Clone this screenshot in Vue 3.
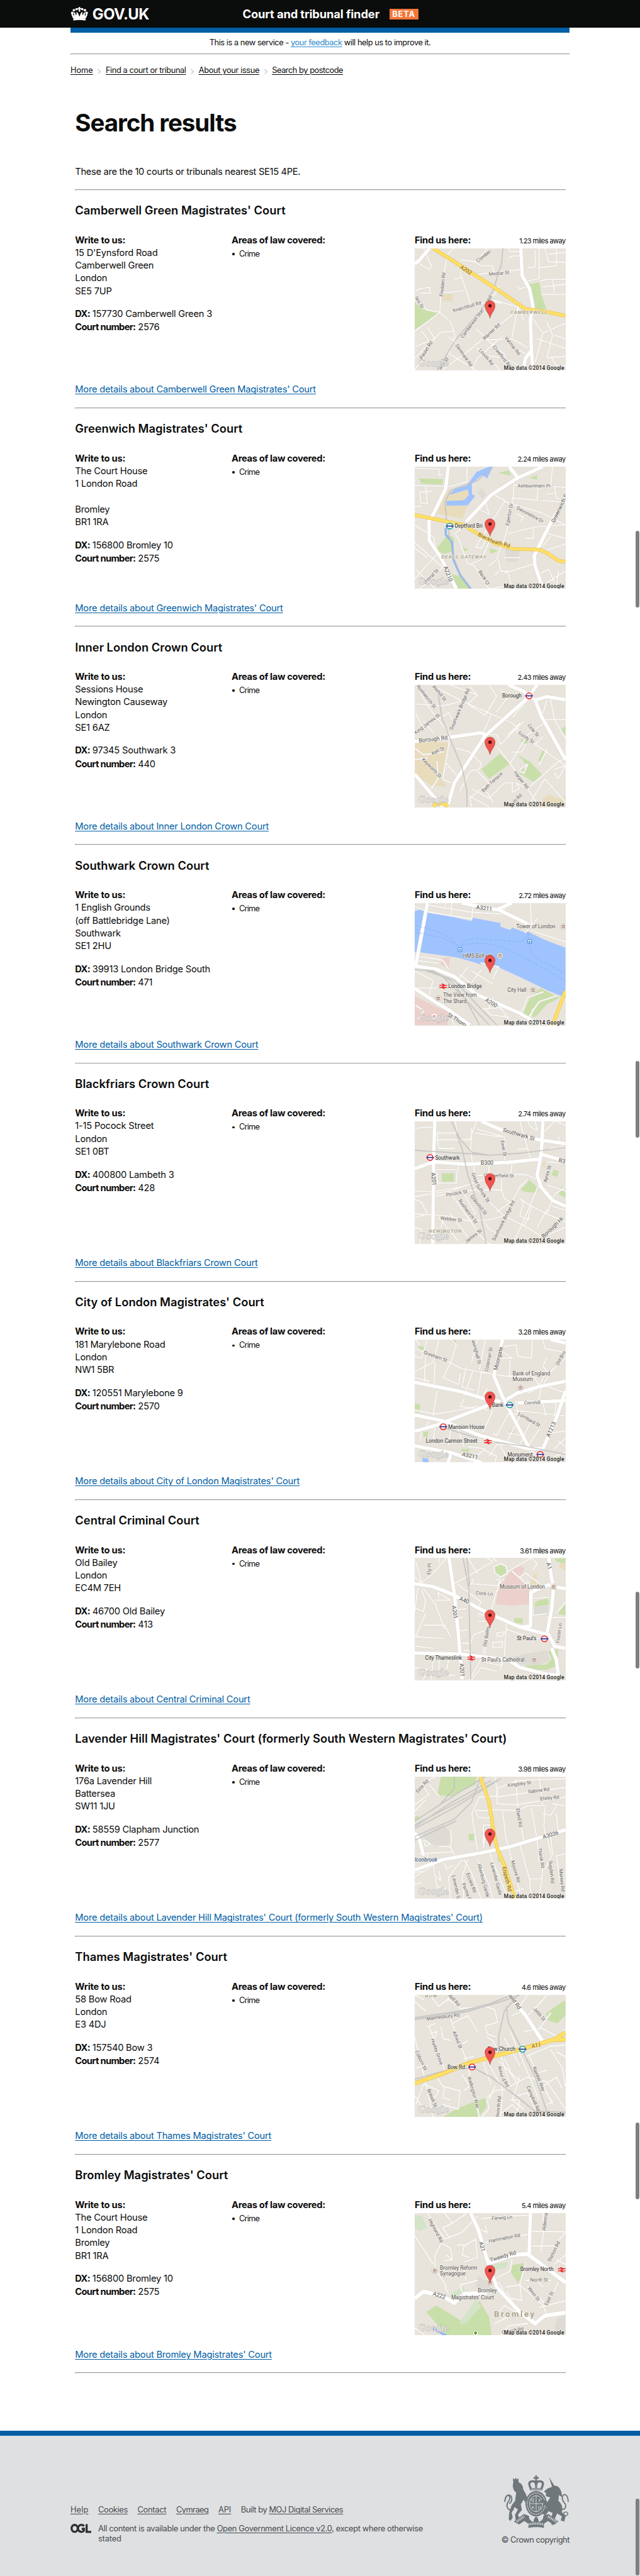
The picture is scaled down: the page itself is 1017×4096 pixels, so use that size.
<script setup>
const courts = [
  { name: "Camberwell Green Magistrates' Court", address: ["15 D'Eynsford Road", 'Camberwell Green', 'London', 'SE5 7UP'], dx: '157730 Camberwell Green 3', number: '2576', miles: '1.23', away: 80 },
  { name: "Greenwich Magistrates' Court", address: ['The Court House', '1 London Road', '\u00a0', 'Bromley', 'BR1 1RA'], dx: '156800 Bromley 10', number: '2575', miles: '2.24', away: 83 },
  { name: 'Inner London Crown Court', address: ['Sessions House', 'Newington Causeway', 'London', 'SE1 6AZ'], dx: '97345 Southwark 3', number: '440', miles: '2.43', away: 83 },
  { name: 'Southwark Crown Court', address: ['1 English Grounds', '(off Battlebridge Lane)', 'Southwark', 'SE1 2HU'], dx: '39913 London Bridge South', number: '471', miles: '2.72', away: 81 },
  { name: 'Blackfriars Crown Court', address: ['1-15 Pocock Street', 'London', 'SE1 0BT'], dx: '400800 Lambeth 3', number: '428', miles: '2.74', away: 82 },
  { name: "City of London Magistrates' Court", address: ['181 Marylebone Road', 'London', 'NW1 5BR'], dx: '120551 Marylebone 9', number: '2570', miles: '3.28', away: 82 },
  { name: 'Central Criminal Court', address: ['Old Bailey', 'London', 'EC4M 7EH'], dx: '46700 Old Bailey', number: '413', miles: '3.61', away: 79 },
  { name: "Lavender Hill Magistrates' Court (formerly South Western Magistrates' Court)", address: ['176a Lavender Hill', 'Battersea', 'SW11 1JU'], dx: '58559 Clapham Junction', number: '2577', miles: '3.98', away: 82 },
  { name: "Thames Magistrates' Court", address: ['58 Bow Road', 'London', 'E3 4DJ'], dx: '157540 Bow 3', number: '2574', miles: '4.6', away: 76 },
  { name: "Bromley Magistrates' Court", address: ['The Court House', '1 London Road', 'Bromley', 'BR1 1RA'], dx: '156800 Bromley 10', number: '2575', miles: '5.4', away: 76 },
]

const green = '#c9dfaa', water = '#9fc3ff', tan = '#e9dcbd', pink = '#ebd0cc', grey = '#dedad4'

// Label: [x, y, angle, text, kind]; icon: [kind, x, y]
const maps = [
  {
    top: 30, sy: 1,
    areas: [[green, 'M54 308L90 345L190 372L54 456Z'], [green, 'M650 216L702 206L712 270L738 346L680 346L668 270Z'], [tan, 'M204 264L254 270L250 306L196 300Z']],
    minor: 'M256 30L225 60L190 250L185 360L120 350L54 290M185 365L54 460M185 365L240 410L268 500L230 575L375 665M100 30L140 120L130 140L70 105M60 250L80 240L130 232L135 262L85 262M290 150L298 180L345 320M262 190L300 180M195 262L310 250M250 355L470 300L590 335M296 90L375 100L430 30M370 100L395 120L460 120L465 170M380 165L610 140M492 225L470 270L440 300L500 315M543 78L560 70L610 68M540 30L545 45L600 46M590 230L600 240L650 225M640 200L700 185L700 30M640 130L680 125L680 40M700 130L790 120L790 30M750 60L837 50M730 30L750 100L837 103M705 200L740 190L837 190M720 230L770 225L837 215M715 270L837 270M770 190L780 260M560 490L590 335L620 400M595 345L330 565L200 660M375 450L430 505L560 500L640 545M510 485L380 600L350 665M430 505L520 580L540 665M375 545L440 600L500 665M420 585L520 600L600 640M250 490L268 520L230 490M54 600L190 465L260 460M90 460L130 510L60 540M54 660L100 600M120 440L160 500M650 370L720 470L680 620M720 470L837 420M740 410L770 480L740 600L837 590M780 480L837 500M690 500L837 550M600 560L650 590M760 590L790 640L837 640',
    major: 'M605 30L612 170L650 240L668 330L655 400L660 560L668 665M660 560L630 600L615 665M130 30L80 90L54 110',
    hwy: 'M150 30L230 80L470 235L630 345L740 360L837 380',
    rail: 'M512 30L505 110L460 250L400 350L270 500L170 665',
    labels: [[382, 104, -38, 'Comber'], [440, 172, -5, 'Medlar St'], [200, 280, -84, 'Flodden Rd'], [54, 285, 60, 'lais St'], [254, 362, -16, 'Knatchbull Rd'], [304, 498, -53, 'Camberwell Stat'], [446, 306, -70, 'Rd'], [416, 508, -43, 'Warner Rd'], [520, 496, 52, 'Valmar Rd'], [458, 542, 52, 'Crawford Rd'], [386, 560, 50, 'Lowth Rd'], [264, 535, 55, 'Denmark Rd'], [92, 608, -58, 'Paulet Rd'], [188, 662, -53, 'arer St'], [288, 132, 33, 'A202', 'road'], [550, 371, 0, 'CAMBERWELL', 'district']],
  },
  {
    top: 57, sy: 1,
    areas: [[tan, 'M225 185L340 150L340 225L300 328L168 300Z'], [water, 'M232 205L260 175L325 155L375 85L440 57L460 57L430 118L405 100L350 145L352 200L368 210L330 258L220 260L218 235L310 232L335 205L330 175Z'], [green, 'M75 118L200 122L200 150L90 145Z'], [green, 'M165 485L225 410L260 430L250 500L200 510Z'], [green, 'M225 610L300 630L340 692L270 692Z'], [green, 'M490 90L540 75L555 105Z'], [green, 'M645 115L690 100L690 125Z'], [green, 'M440 480L490 495L450 510Z'], [green, 'M295 475L335 485L310 500Z'], [grey, 'M380 190L405 170L425 205L405 225Z'], [grey, 'M525 480L600 490L590 550L530 550Z']],
    minor: 'M54 65L180 70L180 100L200 98M54 155L240 160L325 135L325 57M110 160L120 250L85 245L80 190L140 185M54 265L90 262M470 205L540 245L720 300L837 360M570 150L565 220L530 400L505 480M570 150L590 155L760 155L770 57M560 220L810 240M695 160L690 235M780 160L837 165M780 165L790 220L837 240M735 200L780 195M520 240L450 350L370 475L400 480L450 400M385 275L440 305L425 250M540 405L680 370L837 360M670 380L670 430L630 430M580 300L620 320L600 340M260 400L280 430L330 560L360 570L440 692M270 400L310 370M350 560L400 540L440 450M440 570L480 540L500 470M490 540L500 600L540 600M520 530L600 530M520 610L680 560M540 610L560 692M470 620L490 600M54 360L150 420L170 510L54 640M54 450L130 520M130 520L210 590M120 530L54 480M80 692L200 580M160 692L60 590M730 400L837 430M760 420L720 470M740 490L837 460M710 610L750 590L780 660M740 660L837 600M800 600L790 692M440 692L520 680',
    major: 'M228 57L215 170L150 305L128 340L130 440L190 530L270 692M320 345L450 205L590 115L720 57M545 57L590 115M837 230L770 330L700 470L675 520L678 570L720 692',
    hwy: 'M54 308L210 340L310 360L380 405L470 455L570 485L700 488L740 505L800 545L837 552',
    stream: 'M215 375L215 410L248 450L255 540L290 620L345 692',
    rail: 'M460 57L380 130L240 180L212 240L220 350L260 540L290 620L340 692',
    labels: [[588, 164, 0, 'Ashburnham Pl'], [582, 278, 28, 'Devonshire Dr'], [542, 364, -79, 'Egerton Dr'], [780, 350, -64, 'Greenwich S', 'big'], [110, 668, -45, 'dmiral St'], [204, 578, 70, 'A2210', 'big'], [384, 604, 57, 'Beck Cl'], [380, 416, 26, 'Blackh', 'road'], [455, 453, 15, 'eath Rd', 'road'], [192, 535, 0, 'DEALS GATEWAY', 'district'], [262, 374, 0, 'Deptford Bri', 'place']],
    icons: [['dlr', 236, 366]],
  },
  {
    top: 51, sy: 1,
    areas: [[tan, 'M54 345L235 350L190 540L225 580L140 575L54 520Z'], [green, 'M400 490L495 408L548 460L440 540Z'], [green, 'M595 510L650 448L718 520L670 555Z'], [green, 'M590 415L660 455L630 460Z'], [green, 'M610 330L650 340L630 360L605 345Z'], [green, 'M718 390L742 400L715 455L695 445Z'], [green, 'M810 285L837 265L837 315Z'], [tan, 'M720 640L755 620L790 640L837 630L837 684L710 684Z']],
    minor: 'M54 150L200 160L300 135L140 51M60 51L120 160L240 310M54 300L230 195L260 250M240 51L380 105L340 60M300 135L560 250L600 290M380 105L330 150L420 210L480 110L440 51M450 210L410 300M480 190L540 110L500 80M560 220L640 130M620 240L500 360L480 310L430 310M480 370L550 460L640 590L700 684M550 460L640 310L740 240M580 290L740 400L837 470M540 310L600 250M560 400L610 400L630 360M640 590L800 450L837 430M700 470L740 390M760 130L780 230L837 330M730 230L837 230M680 360L720 320M740 130L720 200M240 310L200 540L240 560M54 380L100 415L200 400M54 440L120 430M170 450L175 540L140 590M220 460L270 520M270 380L340 400L400 460L390 490L340 500L290 600M380 500L440 560L340 640L350 684M350 590L440 640L480 600L520 560L570 560M340 630L440 684M430 610L460 660M560 560L560 610L600 590L580 560L640 590M600 490L640 465L620 510L600 500M640 684L730 540L837 660M780 490L837 470L800 540L780 510M100 240L150 300M60 200L90 260',
    major: 'M54 345L240 322L400 300L420 310M224 684L260 560L420 315L640 120L690 51M540 51L620 85L680 130L710 210L837 440M680 130L740 112L837 128M54 515L160 640L200 684',
    rail: 'M175 90L195 220L245 350L300 480L325 600L325 684',
    hwy: 'M150 684L165 668L210 668L228 684',
    labels: [[62, 58, 52, 'Rushworth St'], [145, 58, 52, 'asshill St'], [60, 308, -37, 'King James St'], [250, 288, -67, 'Southwark Bridge Rd'], [76, 350, -6, 'Borough Rd', 'big'], [146, 416, -25, 'Kell St'], [90, 440, 46, 'Keyworth St'], [586, 304, 33, 'Trinity St'], [638, 262, 50, 'Cole St'], [566, 506, 52, 'Harper Rd'], [410, 610, -43, 'Bath Terrace'], [574, 668, -48, 'th Rd'], [508, 116, 0, 'Borough', 'place']],
    icons: [['tube', 648, 108]],
  },
  {
    top: 48, sy: 1,
    areas: [[water, 'M54 90L80 82L350 142L355 124L500 152L498 170L550 188L560 175L625 200L640 195L720 235L837 280L837 540L740 500L600 432L485 380L390 365L350 352L270 330L54 300Z'], [green, 'M610 640L650 545L705 490L808 540L740 575L680 640Z'], [pink, 'M190 335L235 330L232 385L192 372Z'], [pink, 'M54 530L170 590L230 610L225 681L54 681Z']],
    minor: 'M54 65L130 95L350 130L360 48M245 48L245 110M130 60L350 95L500 105M215 48L212 62M510 105L530 48M550 110L660 160L655 48M660 190L837 250M630 200L690 130M54 320L200 345L230 390M54 345L180 360M54 400L150 450L130 520M270 460L330 380M350 460L400 395M350 400L460 470M290 420L340 460M460 440L490 380L400 360M440 590L460 540M500 600L520 570M600 640L640 540L720 510M400 600L500 590L560 681M420 600L450 630L540 640M54 490L170 490M240 640L260 681M60 580L90 600M70 650L100 610M640 650L700 560L790 530M640 681L668 600',
    major: 'M120 48L60 370M300 48L480 82L530 60L560 48M490 82L640 155M54 375L160 390L260 430L370 520L600 620L700 681M54 492L160 560L240 610L340 681',
    hwy: 'M837 505L770 681',
    rail: 'M54 395L150 400L240 450L320 550L390 681M100 395L200 430L300 530L440 681M120 395L260 450L400 600L480 681',
    dashes: 'M54 165Q250 200 288 290Q290 235 380 232L580 248Q640 250 640 200M54 200Q250 230 275 275M300 265Q440 240 560 300T837 455M645 200Q640 320 710 350T837 415',
    labels: [[372, 78, 8, 'A3211', 'big'], [418, 556, 32, 'A200', 'big'], [582, 178, 0, 'Tower of London', 'poi'], [305, 332, 0, 'HMS Belfast', 'poi'], [535, 509, 0, 'City Hall', 'poi'], [202, 536, 0, 'The View from', 'poi'], [202, 568, 0, 'The Shard', 'poi'], [228, 488, 0, 'London Bridge', 'place'], [222, 634, 32, 'St Thom', 'big']],
    icons: [['pier', 289, 290], ['pier', 651, 247], ['poi', 826, 170], ['poi', 497, 322], ['poi', 669, 500], ['poi', 176, 544], ['train', 202, 480], ['hospital', 155, 637]],
  },
  {
    top: 39, sy: 1,
    areas: [[green, 'M194 310L258 308L258 352L196 354Z'], [green, 'M605 395L650 345L700 390L690 412L625 405Z'], [green, 'M775 290L803 298L795 328L765 318Z'], [green, 'M805 385L837 378L837 435L803 420Z'], [tan, 'M720 250L735 245L730 280L718 275Z']],
    minor: 'M54 75L150 68M170 100L180 180L260 180M160 100L275 100L265 39M165 135L340 135L375 39M350 70L345 190L355 260M380 80L520 120L520 240M372 100L500 120M54 430L240 400L400 345L480 340L480 345M54 400L150 405L320 375M54 445L90 460L120 520L54 540M150 430L260 410L370 395L505 395L505 340M165 290L280 290L280 265M170 300L172 360L270 360L275 300M360 260L365 330L385 400L515 530L620 580L720 640M380 320L630 315L690 340M440 270L440 320M505 395L520 440L550 460L480 510M560 260L550 320M230 400L260 440L400 640L440 675M300 400L370 520L330 540M54 520L220 530L330 555L440 550L520 530L600 380L640 340M180 540L280 660M240 520L330 640M415 560L440 600L520 640M560 675L600 600L690 390L720 340M600 440L660 480L640 550L600 530L620 460L600 440M620 580L650 540M660 480L740 520L837 560M740 520L780 420L837 380M690 590L740 500M720 640L837 590M770 480L837 500M740 370L837 400M640 39L660 70L690 85L680 39M600 39L640 180L655 230M590 185L640 180M740 250L837 255M720 100L760 60L780 39M790 39L837 60M760 180L837 175M800 120L820 170M54 590L90 600L80 675M200 560L190 590',
    major: 'M158 39L152 250L148 675M54 285L150 250L320 262L540 252L700 235M400 39L520 90L700 135L837 155M720 39L712 200L690 320L710 380L770 450L837 480M710 210L800 235L837 250',
    rail: 'M54 190L300 205L440 215L600 205L837 175M245 39L290 130L350 200L440 215M270 100L300 180L330 320L390 490L425 675',
    labels: [[510, 92, 16, 'Southwark St', 'big'], [500, 140, 80, 'Ewer St'], [396, 264, 0, 'B300', 'big'], [800, 250, 12, 'B3', 'big'], [412, 328, 1, 'Copperfield St'], [738, 358, -74, 'Ayres St'], [140, 306, 85, 'A201', 'big'], [218, 430, -10, 'Pocock St'], [348, 310, 68, 'Great'], [370, 372, 56, 'Suffolk St'], [342, 430, 52, 'Glasshill St'], [280, 452, 54, 'Rushworth St'], [186, 550, 6, 'Webber St'], [470, 662, -63, 'Southwark Bridge Rd'], [322, 674, -38, 'James St'], [724, 648, -44, 'Borough Hi', 'big'], [126, 619, 0, 'NEWINGTON', 'district'], [160, 237, 0, 'Southwark', 'place']],
    icons: [['tube', 134, 227]],
  },
  {
    top: 33, sy: 1,
    areas: [[green, 'M75 65L110 75L100 90L78 82Z'], [green, 'M240 35L272 38L265 55L245 50Z'], [green, 'M54 365L83 368L78 412L54 410Z'], [green, 'M98 512L125 512L120 543L100 538Z'], [green, 'M295 602L340 602L335 618L295 612Z'], [water, 'M92 650L122 650L128 672L98 672Z'], [grey, 'M540 505L575 490L570 520L545 520Z']],
    minor: 'M54 80L130 110L240 155L300 185L470 215L580 230M240 33L270 60L240 155L200 230L280 265M120 33L90 130L54 120M180 33L150 150L54 200M110 120L105 250M160 150L155 260M290 210L285 260M320 180L300 280L360 295M400 200L380 330M355 200L320 300L350 310M350 150L380 33M420 33L390 190M500 90L560 130L480 130M550 140L545 220L590 225L670 220L700 270M520 70L580 60L590 120L660 130L665 33M720 33L730 80L837 100M700 270L740 200L720 170L740 130M837 130L760 200L720 270L837 310M640 310L720 280M710 290L695 360M430 290L400 340M54 400L160 420L280 400L380 380L430 400M170 300L150 430M310 340L290 380L360 390M460 400L410 510M550 400L480 530L460 520M600 430L530 570M660 450L600 580M700 500L640 590M580 350L590 420L540 420M540 520L600 530M570 400L837 430M720 360L735 430M790 360L780 430M750 520L830 510M780 600L837 545M800 560L837 590M54 500L200 480L330 510M130 460L90 510L80 560M160 480L150 560M240 500L230 580M280 500L310 590M440 640L480 580L520 580M500 590L550 672M420 610L480 640L470 672M340 672L420 600L330 590M650 640L660 610L700 640M54 230L130 250M60 33L80 60M780 640L837 620',
    major: 'M54 255L280 300L430 345L500 355M54 510L160 480L460 365M530 345L590 310L690 280L837 250M510 33L465 220L510 330L650 600M54 425L200 455L390 530L540 572L640 600L720 600L790 440L837 300M54 585L240 620L400 672M240 630L228 672M760 33L837 50M590 362L837 350',
    rail: 'M470 565L640 590L837 630M200 490L380 545',
    labels: [[98, 106, 20, 'Gresham St'], [350, 38, 75, 'asinghall St'], [434, 200, -79, 'Coleman St'], [482, 194, -76, 'Moorgate', 'big'], [800, 170, -62, 'Old Bro'], [622, 370, -1, 'Cornhill'], [588, 424, 30, 'Lombard St'], [754, 542, -66, 'A1213', 'big'], [298, 638, 12, 'A3211', 'big'], [562, 218, 0, 'Bank of England', 'poi'], [562, 250, 0, 'Museum', 'poi'], [455, 382, 0, 'Bank', 'place'], [228, 496, 0, 'Mansion House', 'place'], [112, 570, 0, 'London Cannon Street', 'place'], [536, 640, 0, 'Monument', 'place']],
    icons: [['poi', 604, 284], ['dlr', 547, 373], ['tube', 202, 486], ['train', 434, 563], ['tube', 706, 630]],
  },
  {
    top: 30, sy: 1,
    areas: [[pink, 'M490 165L590 65L625 85L600 140L650 200L650 270L560 280L475 270Z'], [green, 'M500 58L535 75L535 115L500 130L470 110L468 75Z'], [green, 'M570 342L615 345L615 372L572 368Z'], [green, 'M675 270L690 255L745 240L750 275L680 285Z'], [green, 'M780 35L837 30L837 60L790 50Z'], [tan, 'M660 130L690 105L685 160L700 180L655 175Z'], [tan, 'M810 55L837 60L837 95L805 80Z'], [grey, 'M672 285L745 280L745 330L675 325Z'], [grey, 'M555 545L740 510L755 560L700 590L600 585Z'], [green, 'M628 590L740 585L765 555L745 515L800 505L795 590L740 612L640 612Z'], [green, 'M795 320L837 270L837 330Z']],
    minor: 'M60 50L90 160L150 110L220 30M54 130L90 160M100 190L160 270L210 400M70 190L54 310M90 200L110 250L100 310L54 290M180 60L180 30M180 240L175 210L240 250M160 250L235 250M100 380L210 380L240 440M60 440L110 320M260 165L460 50L430 30M280 170L400 260L380 290M360 140L330 200M350 165L480 175L520 140M480 200L445 330M500 60L530 75L535 110L500 130L470 110L465 75L500 60M475 145L495 140L485 200M380 110L330 30L350 60M560 100L640 170M600 130L630 110L700 160M640 150L650 180L700 200M540 100L660 30L690 60L670 90M460 30L480 50M385 320L440 340M385 360L430 360M340 480L360 430L440 400L420 520L340 662M440 330L410 520M260 300L320 295M280 340L300 340M290 410L325 405M300 475L335 475M310 510L345 515M530 370L520 540L500 610M460 470L510 465L510 495L460 495L460 470M480 420L520 415L510 440L480 435ZM410 570L500 590L520 550M350 662L400 600L480 620M670 240L750 235M740 320L660 330M665 250L670 330M740 340L837 340M790 320L837 260M640 410L650 395M700 450L640 440L530 400M54 440L200 450M60 490L150 500M150 560L140 662M180 550L180 640L260 640M54 600L120 610L100 662M230 560L220 610',
    major: 'M54 165L150 180L250 220L440 320L600 390L750 430L780 490L837 500M232 30L260 220L280 420L300 662M54 525L290 530L540 560L600 600L740 635L800 640L790 560L765 500M750 30L765 140L775 180L837 190M700 190L750 170L775 185L765 300L740 430M600 390L655 385L658 210L700 190',
    rail: 'M305 30L335 190L345 662M325 30L340 180',
    labels: [[136, 118, -87, 'Ely Pl'], [370, 220, 5, 'Cock Ln'], [284, 250, 22, 'A40', 'big'], [248, 280, 82, 'A201', 'big'], [288, 580, 86, 'A201', 'big'], [738, 58, 75, 'A1', 'big'], [426, 494, -81, 'Old Bailey'], [804, 474, -82, 'Foster Ln'], [496, 190, 0, 'Museum of London', 'poi'], [400, 570, 0, "St Paul's Cathedral", 'poi'], [108, 559, 0, 'City Thameslink', 'place'], [584, 459, 0, "St Paul's", 'place']],
    icons: [['poi', 775, 181], ['poi', 675, 561], ['train', 348, 551], ['tube', 728, 451]],
  },
  {
    top: 39, sy: 1,
    areas: [[green, 'M190 39L375 39L370 80L240 142L172 135Z'], [green, 'M54 250L70 242L78 255L54 270Z'], [green, 'M333 338L362 335L362 372L335 370Z'], [green, 'M485 450L500 480L485 482Z'], [grey, 'M95 340L205 290L240 330L235 390L170 400L110 370Z']],
    minor: 'M54 185L130 130L90 80L160 39M130 80L180 140M54 220L110 160M470 39L480 100L480 140L390 145L350 230L380 420M370 215L450 215M370 220L385 250L440 255L445 225M410 390L410 290L455 290M480 100L580 60L837 50M480 180L580 185L837 145M480 145L837 95M580 60L590 210L620 370M485 110L480 180M700 39L720 190M510 220L530 370L550 410M450 210L590 215L640 190L740 190M660 200L690 370M730 200L725 300L735 360M790 230L800 330L780 350M720 230L760 240L790 190M770 180L837 190M410 410L420 340M54 560L200 470M110 370L135 390L110 400L100 370ZM80 440L250 430M180 400L240 405L265 460M240 320L245 370L240 400M120 440L120 470M150 500L170 610L230 630M210 490L220 520L250 500M300 470L230 560L240 675M310 470L350 540L400 675M330 470L300 560L310 675M380 470L440 600L460 675M440 430L460 480L540 675M540 400L580 560L600 640M600 390L650 570L715 570L720 500M690 370L700 480M760 350L770 440L730 520M837 440L790 450L810 600M650 570L660 675M715 570L700 675M180 530L190 580L170 560M560 640L620 620M54 600L90 590M54 540L90 530M740 340L760 440',
    major: 'M54 525L200 470L400 435L560 400L837 315M54 330L80 370L100 450',
    hwy: 'M395 39L440 170L470 360L485 420L520 500L575 675',
    rail: 'M54 290L300 160L480 60M54 310L260 200L500 50M54 270L300 110L420 39M54 350L260 260L350 170L390 60M54 300L250 170L450 60M54 370L180 310L270 270M260 39L260 100L180 190',
    labels: [[70, 125, -47, 'Este Rd'], [538, 92, -7, 'Kingsley St'], [644, 126, -7, 'Sabine Rd'], [706, 162, -5, 'Elsley Rd'], [580, 206, 80, 'Eland Rd'], [722, 362, -16, 'A3036', 'big'], [694, 412, 80, 'Thirsk Rd'], [750, 476, 84, 'Sugden Rd'], [804, 520, 84, 'Marney Rd'], [554, 478, 74, 'Mysore Rd'], [446, 488, 75, 'Lavender Garde'], [380, 494, 75, 'Altenburg Garde'], [248, 554, 78, 'Lavender S'], [320, 544, 68, 'Eccles Rd'], [298, 596, 68, 'Parma C'], [508, 510, 76, 'Elspeth Rd', 'road'], [54, 480, 0, 'lconbrook', 'river']],
  },
  {
    top: 40, sy: 1.186,
    areas: [[green, 'M735 120L837 62L837 130L795 165L740 150Z'], [green, 'M200 576L280 535L420 492L428 530L385 576Z']],
    minor: 'M54 70L110 110M130 40L180 90L250 40M54 40L100 60M190 80L230 60L290 100L420 90L470 105L485 160L420 175L430 210L480 225M240 145L260 190L320 320L390 576M250 165L330 130L380 200M120 180L160 165M130 180L210 370M140 210L170 200L150 250M190 180L200 230L240 240M54 225L110 420L150 576M60 360L120 350M290 260L330 240M310 320L360 310M410 335L450 430M430 225L460 240L490 290M440 345L510 450L500 576M500 300L550 440L640 400L740 420L837 540M550 200L700 500M520 230L600 350M490 330L590 410M540 370L580 420M520 320L550 370M630 310L760 265L837 260M650 310L700 400L770 520M760 280L820 360L837 440M790 290L837 310M600 400L560 500L620 540M590 480L640 470L700 576M720 440L790 400L820 450M700 380L740 370M700 420L770 510L740 520M170 400L200 440L290 460L280 540L200 520M210 440L200 490L240 500M60 520L100 430L180 460L150 500M54 480L100 540M300 390L340 440L310 460M430 490L470 460L540 450M430 500L440 540L400 576M550 500L600 500L590 540M470 440L440 500M560 130L620 110M600 90L640 40M640 130L700 80L740 40M620 200L700 190L760 120M790 240L837 190M700 180L790 220M480 576L560 520L620 576',
    major: 'M530 30L630 130L720 245',
    hwy: 'M54 428L200 385L330 340L460 310L640 270L780 235L837 205M780 237L837 235',
    rail: 'M54 140L300 110L440 80L560 40M54 148L330 112L500 70L600 40M590 40L520 110L490 220L490 300M530 90L540 160L600 260L680 400L740 550M54 410L220 370L360 360L450 400L560 470L680 550L837 555',
    labels: [[116, 152, -7, 'Malmesbury Rd'], [228, 44, 48, 'dell Rd'], [536, 40, 54, 'field Rd', 'big'], [668, 102, 50, 'Jebb St'], [138, 236, 70, 'Harley Grove'], [250, 202, 68, 'Alfred St'], [56, 288, 65, 'Coborn St'], [118, 456, 68, 'British St'], [328, 400, 74, 'Wellington Way'], [486, 354, 76, 'Arnol'], [505, 410, 57, 'd Rd'], [490, 580, -83, 'dworth Rd'], [666, 358, 68, 'Rainhill Way'], [634, 442, 67, 'Campbell Rd'], [662, 272, -6, 'A11', 'road'], [108, 51, 0, 'BOW', 'district'], [432, 286, 0, 'Bow Church', 'place'], [224, 365, 0, 'Bow Rd', 'place']],
    icons: [['dlr', 614, 278], ['tube', 352, 356]],
  },
  {
    top: 996, sy: 1.186,
    areas: [[green, 'M115 1430L165 1400L300 1470L390 1380L440 1450L455 1532L220 1532Z'], ['#d3e4c9', 'M285 1480L370 1375L400 1405L320 1480Z'], ['#d3e4c9', 'M54 1005L90 1010L120 1060L80 1075L54 1055Z'], ['#d3e4c9', 'M430 1225L540 1210L530 1235L480 1245Z'], ['#d3e4c9', 'M240 1350L310 1318L315 1340L260 1365Z'], [green, 'M555 1225L625 1215L615 1270L590 1302L555 1260Z'], [grey, 'M380 1270L440 1300L450 1340L370 1320Z'], [grey, 'M790 1460L837 1440L837 1520L780 1510Z']],
    minor: 'M120 996L170 1060L210 1110L300 1080L380 1010M54 1095L150 1220M210 996L250 1040L200 1060L230 1100M250 1040L320 1000M200 1130L240 1150L250 1200M190 1130L160 1180L160 1240L220 1320M275 1135L310 1135L300 1180L340 1190M370 1060L430 1080L420 1050M400 1020L520 1010L650 1005M420 1125L640 1090M660 1140L780 1140L837 1080M720 996L725 1070L710 1160M650 1075L837 1078M310 1140L370 1110L380 1190L310 1210M220 1180L250 1200L210 1205M630 1290L760 1290M630 1215L600 1310L720 1400L740 1440M530 1320L600 1310L610 1380L560 1370M480 1280L550 1250L560 1200M490 1300L560 1400L600 1420M530 1340L600 1430M640 1320L740 1400L800 1300M700 1410L837 1380M720 1320L690 1290M300 1340L290 1310L380 1290M54 1360L100 1340M54 1500L110 1532M480 1440L520 1400L600 1440M470 1480L540 1450M500 1532L540 1490L640 1480M780 1220L837 1180M790 1200L837 1220M230 1350L210 1320M310 1240L320 1290',
    major: 'M345 996L385 1070L430 1200L480 1320L600 1430L680 1480L730 1445L837 1432M440 1215L560 1180L640 1175L837 1300M655 996L648 1180M54 1370L100 1340L200 1360L260 1390L310 1350L430 1345',
    stream: 'M150 1500L220 1535',
    labels: [[454, 1026, -4, 'Farwig Ln'], [440, 1126, -11, 'Hammelton Rd'], [448, 1210, -17, 'Tweedy Rd', 'big'], [124, 1026, 62, 'Highland Rd'], [388, 1124, 75, 'A21', 'big'], [732, 1074, -82, 'Alderma'], [758, 1210, -63, 'Station Rd'], [654, 1296, -1, 'North St'], [640, 1326, 52, 'West St'], [742, 1402, -64, 'East St'], [146, 1356, 17, 'A222', 'big'], [508, 1526, -10, 'Church Rd'], [185, 1243, 0, 'Bromley Reform', 'poi'], [185, 1270, 0, 'Synagogue', 'poi'], [382, 1343, 0, 'Bromley', 'poi'], [244, 1373, 0, "Magistrates' Court", 'poi'], [466, 1452, 0, 'Bromley', 'town'], [602, 1250, 0, 'Bromley North', 'place']],
    icons: [['poi', 158, 1249], ['poi', 445, 1301], ['train', 818, 1244], ['tree', 370, 1522]],
  },
]

const thumbs = [919, 1838, 2757, 3677, 4328]

// Spreads or tightens the letters so that the text takes the given width.
const vFit = {
  mounted(el, { value }) {
    const page = el.closest('.page')
    const scale = page.getBoundingClientRect().width / 1108
    const natural = el.getBoundingClientRect().width / scale
    el.style.letterSpacing = `${(value - natural) / el.textContent.trim().length}px`
  },
}
</script>

<template>
  <div class="page">
    <header class="top">
      <div class="wrap top-row">
        <a class="brand">
          <svg class="crown" width="31" height="24" viewBox="0 0 31 24" fill="#fff">
            <circle cx="3" cy="10.5" r="2.2" /><circle cx="6" cy="5.8" r="2.2" /><circle cx="10.6" cy="3.8" r="2" /><circle cx="20.4" cy="3.8" r="2" /><circle cx="25" cy="5.8" r="2.2" /><circle cx="28" cy="10.5" r="2.2" />
            <path d="M14.2 0h2.6l-.5 2.2 2.3-.5v2.6l-2.2-.4.7 3.2-1.6 1.5-1.6-1.5.7-3.2-2.2.4V1.700l2.300.5z" />
            <path d="M1.400 13l3.200-.7 1 4.200.7-4-1.300-3.400 3.300 1.300 1 4.400 1.400-3-.7-3.700 3 2.600L15.500 17l2.500-6.300 3-2.600-.7 3.700 1.400 3 1-4.400L26 9.100l-1.300 3.400.7 4 1-4.200 3.200.7-3 7H4.400z" />
            <path d="M4.500 20.500q11-3 22 0l-.8 3.200q-10.200-2.200-20.400 0z" />
          </svg>
          <span v-fit="98" class="brand-name">GOV.UK</span>
        </a>
        <span class="service"><span v-fit="237">Court and tribunal finder</span></span>
        <span class="beta"><span v-fit="40">BETA</span></span>
      </div>
    </header>

    <div class="wrap">
      <div class="blue" />
      <p class="feedback"><span v-fit="383">This is a new service - <a>your feedback</a> will help us to improve it.</span></p>
      <div class="rule" />
      <nav class="crumbs">
        <a v-fit="39">Home</a><i /><a v-fit="139">Find a court or tribunal</a><i /><a v-fit="105">About your issue</a><i /><a v-fit="123">Search by postcode</a>
      </nav>
    </div>

    <main>
      <h1><span v-fit="279">Search results</span></h1>
      <p class="intro"><span v-fit="390">These are the 10 courts or tribunals nearest SE15 4PE.</span></p>

      <section v-for="(court, n) in courts" :key="n" class="court">
        <div class="rule" />
        <h2>{{ court.name }}</h2>
        <div class="cols">
          <div class="write">
            <h3><span v-fit="87">Write to us:</span></h3>
            <p v-for="(line, i) in court.address" :key="i">{{ line }}</p>
            <div class="refs">
              <p><b>DX:</b> {{ court.dx }}</p>
              <p><b>Court number:</b> {{ court.number }}</p>
            </div>
          </div>
          <div class="law">
            <h3><span v-fit="162">Areas of law covered:</span></h3>
            <ul><li><span v-fit="35">Crime</span></li></ul>
          </div>
          <div class="find">
            <div class="find-head">
              <h3><span v-fit="97">Find us here:</span></h3>
              <small><span v-fit="court.away">{{ court.miles }} miles away</span></small>
            </div>
            <svg class="map" viewBox="0 0 783 636">
              <g :transform="`scale(1 ${maps[n].sy}) translate(-54 ${-maps[n].top})`">
                <path v-for="(a, i) in maps[n].areas" :key="i" :fill="a[0]" :d="a[1]" />
                <path v-if="maps[n].stream" class="stream" :d="maps[n].stream" />
                <path class="minor case" :d="maps[n].minor" />
                <path class="minor" :d="maps[n].minor" />
                <path v-if="maps[n].major" class="major case" :d="maps[n].major" />
                <path v-if="maps[n].major" class="major" :d="maps[n].major" />
                <path v-if="maps[n].rail" class="rail" :d="maps[n].rail" />
                <path v-if="maps[n].hwy" class="hwy case" :d="maps[n].hwy" />
                <path v-if="maps[n].hwy" class="hwy" :d="maps[n].hwy" />
                <path v-if="maps[n].dashes" class="dashes" :d="maps[n].dashes" />
              </g>
              <text v-for="(l, i) in maps[n].labels" :key="i" :class="['label', l[4]]" :transform="`translate(${l[0] - 54} ${(l[1] - maps[n].top) * maps[n].sy}) rotate(${l[2]})`">{{ l[3] }}</text>
              <g v-for="(k, i) in maps[n].icons" :key="i" :transform="`translate(${k[1] - 54} ${(k[2] - maps[n].top) * maps[n].sy})`">
                <template v-if="k[0] === 'tube' || k[0] === 'dlr'">
                  <circle r="15" fill="#fff" :stroke="k[0] === 'tube' ? '#ee1c23' : '#12a0a6'" stroke-width="5" />
                  <path d="M-20 0H20" stroke="#2b3a9c" stroke-width="6" />
                </template>
                <path v-else-if="k[0] === 'train'" d="M-20 -5H20M-20 6H20M-8 -13L8 -5L-8 6L8 13" fill="none" stroke="#ee1c23" stroke-width="4.500" />
                <template v-else-if="k[0] === 'pier'">
                  <rect x="-10" y="-10" width="20" height="20" rx="3" fill="#fff" stroke="#4a90d9" stroke-width="4" />
                  <path d="M-6 5H6L3 -4H-3Z" fill="#4a90d9" />
                </template>
                <template v-else-if="k[0] === 'hospital'">
                  <circle r="14" fill="#fff" /><path d="M-4 -7V7M4 -7V7M-4 0H4" stroke="#e33" stroke-width="3" fill="none" />
                </template>
                <template v-else-if="k[0] === 'tree'">
                  <circle r="15" fill="#fff" stroke="#a9a49b" stroke-width="2" /><circle cy="-1" r="8" fill="#62a01c" /><path d="M0 0V11" stroke="#62a01c" stroke-width="3" />
                </template>
                <template v-else>
                  <circle r="15" fill="#fff" stroke="#b5b0a8" stroke-width="2.500" />
                  <path d="M-9 -4L0 -9L9 -4ZM-7 -2V6M0 -2V6M7 -2V6M-9 7H9" fill="none" stroke="#8a5a3c" stroke-width="2.500" />
                </template>
              </g>
              <g class="pin">
                <path d="M391 363C388 338 365 325 365 297A26 26 0 0 1 417 297C417 325 394 338 391 363Z" fill="#f0544f" stroke="#a93430" stroke-width="2" />
                <circle cx="391" cy="298" r="8.500" fill="#4d0d0b" />
              </g>
              <text class="google" x="20" y="610" textLength="156">Google</text>
              <text class="credit" x="463" y="630" textLength="313">Map data ©2014 Google</text>
            </svg>
          </div>
        </div>
        <a class="more">More details about {{ court.name }}</a>
      </section>
      <div class="rule" />
    </main>

    <footer>
      <div class="wrap foot">
        <div class="foot-text">
          <p class="links"><a v-fit="31">Help</a><a v-fit="51">Cookies</a><a v-fit="50">Contact</a><a v-fit="56">Cymraeg</a><a v-fit="22">API</a><span v-fit="177">Built by <a>MOJ Digital Services</a></span></p>
          <div class="licence">
            <svg width="36" height="16" viewBox="0 0 36 16" fill="none" stroke="#2c3032" stroke-width="3.600">
              <ellipse cx="7.200" cy="8" rx="5.300" ry="6.100" />
              <path d="M23.500 4.100A5.900 6.100 0 1 0 23.300 12V8.700H19.500M28 .5V14H36" />
            </svg>
            <p><span v-fit="562">All content is available under the <a>Open Government Licence v2.0</a>, except where otherwise</span><br><span v-fit="40">stated</span></p>
          </div>
        </div>
        <div class="crest">
          <svg width="113" height="92" viewBox="0 0 113 92" fill="#6f777b">
            <path d="M54 0h3v3h3v3h-3v3c8-2 13 1 12 7-.5 3-2 6-3 10H45c-1-4-2.500-7-3-10-1-6 4-9 12-7V6h-3V3h3z" />
            <path d="M48 22c-3-6-4-10 2-10 3 0 4 4 4 10zM63 22c3-6 4-10-2-10-3 0-4 4-4 10z" fill="#dee0e2" />
            <path d="M46 24h19" stroke="#dee0e2" stroke-width="1" />
            <ellipse cx="55.500" cy="49" rx="18.500" ry="22" />
            <ellipse cx="55.500" cy="49" rx="15.500" ry="18.500" fill="none" stroke="#dee0e2" stroke-width="1.600" stroke-dasharray="2 1.500" />
            <ellipse cx="55.500" cy="49" rx="11.500" ry="14" fill="none" stroke="#dee0e2" />
            <path d="M55.500 35v28M44 49h23M48 40v6M51 39v8M60 41l3 5M60 46l3-5M48 53l4 5M52 53l-4 5M60 53v7M63 53v6" stroke="#dee0e2" stroke-width="1" />
            <path d="M16 11l-1-6 3 2 2-3 2 3 3-2v7c6 2 8 7 8 12l5 9 3 9-4 5-3-5-5 8 2 10-7 8 4 10-3 3-5-4-1-9 5-9-6-4-5 10 2 8-4 6-3-3 1-12 4-12 6-8 2-14-4-4-2-7z" />
            <path d="M17 59C5 63 3 52 7 46c4-5 4-10 0-12-4 1-5 6-6 12M8 34c7 1 7 11 1 15" fill="none" stroke="#6f777b" stroke-width="2.200" />
            <path d="M78 3l9 15c6-1 10 4 12 10l2 10-6-4-1 10c7 6 8 13 6 20l7 6-3 10-6-2 2-7-8-5-6 13 4 5-7 2-3-7 4-14-7-3-6 8-5-4 8-11-6-7-7-3 6-4 8 5 5-8-8-2 1-5-4-3 6-5 8-3z" />
            <path d="M96 58c11 4 13-6 8-11-5-6-4-13 1-14 5 1 6 7 6 13" fill="none" stroke="#6f777b" stroke-width="2" />
            <path d="M104 64c6-2 8 2 5 5s-7-1-5-5M94 63c5 0 9 3 7 8" fill="none" stroke="#6f777b" stroke-width="1.500" />
            <path d="M17 80l17-13 9 3c0 6 3 9 8 11 0-5 2-8 4.500-10 2.500 2 4.500 5 4.500 10 5-2 8-5 8-11l9-3 17 13-9 5-9-6-7 5v7c-8-2-19-2-27 0v-7l-7-5-9 6z" />
            <path d="M22 80l13-9M90 80l-14-9M42 85q13-3 27 0" fill="none" stroke="#dee0e2" stroke-width="4" stroke-dasharray="1.500 1.500" />
          </svg>
          <p><span v-fit="118">© Crown copyright</span></p>
        </div>
      </div>
    </footer>

    <span v-for="y in thumbs" :key="y" class="thumb" :style="{ top: y + 'px' }" />
  </div>
</template>

<style>
html, body { margin: 0; background: #fff; overflow: hidden; }
</style>

<style scoped>
.page { position: relative; width: 1108px; height: 4462px; zoom: 0.91787; overflow: hidden; background: #fff; color: #0b0c0c; font: 16px/22px Inter, "Liberation Sans", sans-serif; display: flex; flex-direction: column; }
h1, h2, h3, p, ul { margin: 0; padding: 0; white-space: nowrap; }
a { text-decoration: underline; text-underline-offset: 2px; text-decoration-thickness: 1px; }
.wrap { width: 864px; margin: 0 auto; }
.top { height: 48px; background: #0b0c0c; color: #fff; }
.top-row { display: flex; height: 48px; align-items: flex-start; }
.brand { display: flex; width: 298px; text-decoration: none; }
.crown { margin-top: 12px; }
.brand-name { margin: 6px 0 0 7px; font: 700 26px/38px Inter, sans-serif; align-self: flex-start; }
.service { width: 254px; font-weight: 700; font-size: 20px; line-height: 48px; }
.beta { width: 50px; height: 19px; margin-top: 15px; background: #f47738; font-weight: 700; font-size: 14px; line-height: 19px; text-align: center; }
.blue { height: 9px; background: #005ea5; }
.feedback { height: 36px; font-size: 14px; line-height: 34px; text-align: center; }
.feedback a { color: #2e8aca; }
.rule { height: 1px; border-top: 1px solid #9a9a9a; border-left: 1px solid #b5b5b5; background: #eee; }
.crumbs { display: flex; align-items: center; height: 20px; margin-top: 17px; font-size: 14px; line-height: 20px; }
.crumbs i { flex: none; box-sizing: border-box; width: 6px; height: 6px; margin: 3px 10px 0 6px; border: solid #b4b8ba; border-width: 1.500px 1.500px 0 0; transform: rotate(45deg); }
main { width: 849px; margin: 0 129px 0 130px; }
h1 { margin-top: 55px; font-size: 42px; line-height: 52px; font-weight: 700; }
.intro { margin-top: 47px; height: 42px; }
.court { height: 378.200px; box-sizing: border-box; }
h2 { margin-top: 20px; font-size: 20px; line-height: 30px; font-weight: 600; letter-spacing: 0; }
.cols { display: flex; height: 259px; margin-top: 25px; }
.write { width: 271px; letter-spacing: -0.015em; }
.write b { font-weight: 700; letter-spacing: -0.045em; }
.refs { margin-top: 18px; line-height: 23px; }
.law { width: 317px; }
h3 { font-size: 16px; line-height: 22px; font-weight: 700; letter-spacing: 0; }
ul { list-style: none; }
li { display: flex; align-items: center; margin-top: 2px; font-size: 14px; }
li::before { content: ""; width: 4px; height: 4px; margin: 0 8px 0 1px; border-radius: 50%; background: #0b0c0c; }
.find { width: 261px; }
.find-head { display: flex; justify-content: space-between; height: 22px; }
small { font-size: 12px; line-height: 24px; }
.map { display: block; width: 261px; height: 212px; margin-top: 3px; background: #e8e4dc; }
.map path.minor, .map path.major, .map path.hwy, .map path.rail, .map path.stream, .map path.dashes { fill: none; stroke-linejoin: round; }
.map path.minor { stroke: #f8f7f4; stroke-width: 7; stroke-linecap: round; }
.map path.minor.case { stroke: #d9d4ca; stroke-width: 9.500; }
.map path.major { stroke: #fff; stroke-width: 18; }
.map path.major.case { stroke: #d6d1c8; stroke-width: 21; }
.map path.hwy { stroke: #ffe066; stroke-width: 14; }
.map path.hwy.case { stroke: #e8c457; stroke-width: 19; }
.map path.rail { stroke: #bdbdbd; stroke-opacity: .75; stroke-width: 6; }
.map path.stream { stroke: #8db9f8; stroke-width: 11; }
.map path.dashes { stroke: #7fa9ec; stroke-width: 2.500; stroke-dasharray: 16 8; }
.label { font: 25px Roboto, sans-serif; fill: #66635e; stroke: #f6f4f0; stroke-width: 4; paint-order: stroke; }
.label.big { font-size: 29px; fill: #55534f; }
.label.road { font-size: 28px; fill: #7a5317; stroke: #ffe88f; }
.label.place { font-size: 27px; fill: #1c1c1c; }
.label.poi { font-size: 27px; fill: #524e49; }
.label.district { font: italic 500 26px Roboto, sans-serif; letter-spacing: 3px; fill: #a39b80; }
.label.town { font: 500 42px Roboto, sans-serif; letter-spacing: 9px; fill: #a39b80; }
.label.river { font: italic 500 27px Roboto, sans-serif; fill: #4f6a92; }
.google { font: 50px "Liberation Serif", serif; fill: #f5f5f5; stroke: #a6a39d; stroke-width: 3; paint-order: stroke; }
.credit { font: 500 27px Roboto, sans-serif; fill: #111; stroke: #f3f1ec; stroke-width: 3; paint-order: stroke; }
.more { display: block; width: max-content; color: #005ea5; letter-spacing: -0.015em; white-space: nowrap; }
footer { height: 251.500px; box-sizing: border-box; margin-top: auto; border-top: 9.500px solid #005ea5; background: #dee0e2; color: #454a4d; font-size: 14px; line-height: 17px; }
.foot { display: flex; justify-content: space-between; }
.foot-text { padding-top: 119px; }
.links { display: flex; gap: 17px; height: 20px; line-height: 20px; }
.licence { display: flex; gap: 12px; margin-top: 14px; }
.crest { padding-top: 69px; text-align: right; }
.crest svg { display: block; margin-left: auto; }
.crest p { margin-top: 11px; line-height: 18px; }
.thumb { position: absolute; right: 1px; width: 7px; height: 133px; border-radius: 4px; background: #7f7f7f; }
</style>
